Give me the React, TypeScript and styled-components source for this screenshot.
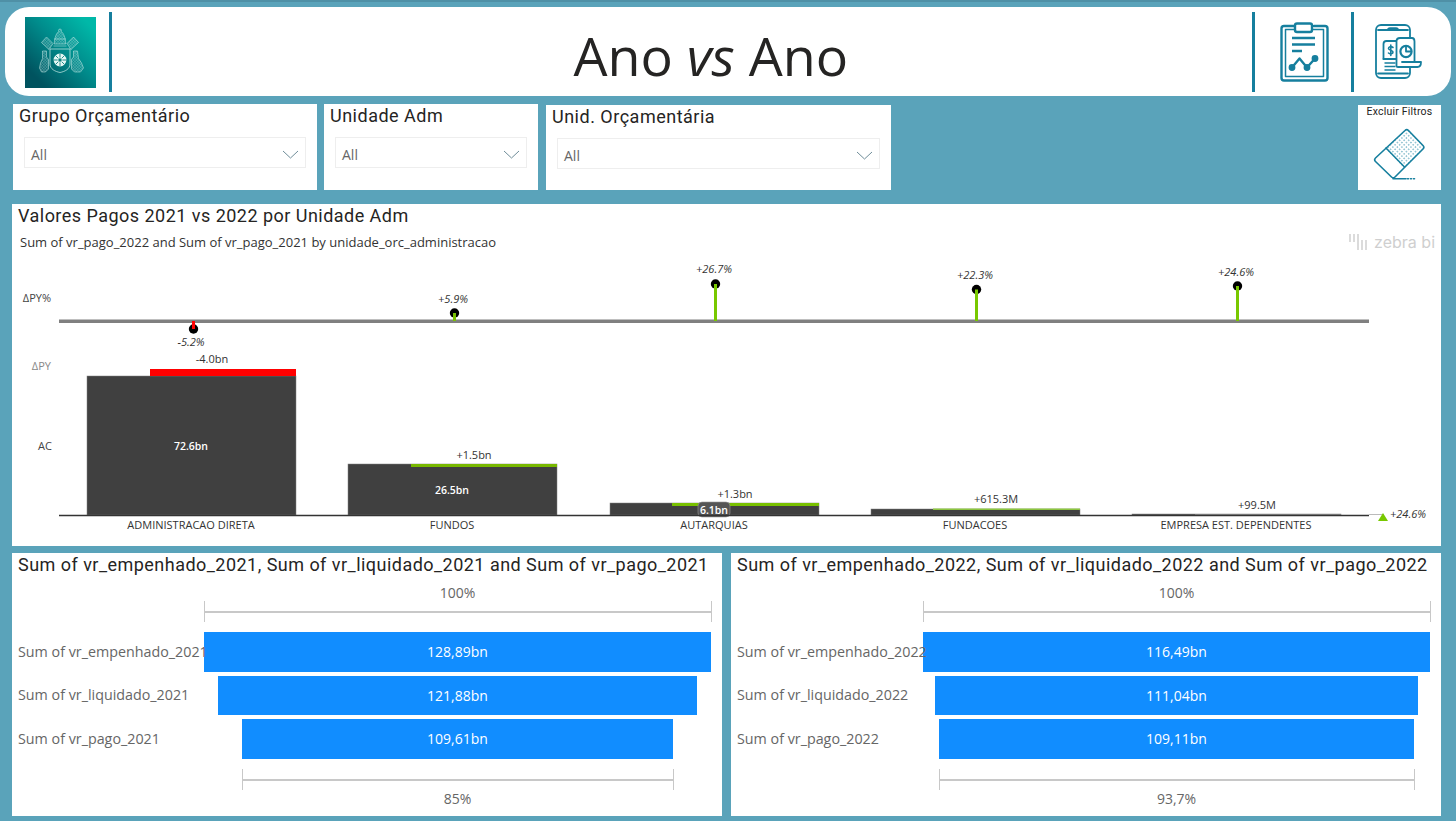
import React from 'react';
import styled, { createGlobalStyle } from 'styled-components';

const TEAL = '#167f9e';

const GlobalStyle = createGlobalStyle`
  html, body {
    margin: 0;
    padding: 0;
    background: #5aa3ba;
  }
  * {
    box-sizing: border-box;
  }
`;

const filters = [
  { title: 'Grupo Orçamentário', width: 304, top: 0, after: 0, height: 86 },
  { title: 'Unidade Adm', width: 214, top: 0, after: 1, height: 86 },
  { title: 'Unid. Orçamentária', width: 345, top: 1, after: 0, height: 85 },
];

const lollipops = [
  { x: 193.5, dotY: 329, color: '#ff0000', label: '-5.2%', labelX: 191, labelY: 342 },
  { x: 454.5, dotY: 313, color: '#78c000', label: '+5.9%', labelX: 453, labelY: 299 },
  { x: 715.5, dotY: 284, color: '#78c800', label: '+26.7%', labelX: 714, labelY: 269 },
  { x: 976.5, dotY: 289.5, color: '#78c800', label: '+22.3%', labelX: 975, labelY: 275 },
  { x: 1237.5, dotY: 286, color: '#78c800', label: '+24.6%', labelX: 1236, labelY: 272 },
];

const columns = [
  { x: 87, top: 376, name: 'ADMINISTRACAO DIRETA', nameX: 191, delta: '-4.0bn', deltaX: 212, deltaY: 359, value: '72.6bn', valueY: 446, color: '#ff0000', barTop: 369, barH: 7, barX: 150 },
  { x: 348, top: 464, name: 'FUNDOS', nameX: 452, delta: '+1.5bn', deltaX: 474, deltaY: 455, value: '26.5bn', valueY: 490, color: '#78b800', barTop: 464, barH: 3, barX: 411 },
  { x: 610, top: 503, name: 'AUTARQUIAS', nameX: 714, delta: '+1.3bn', deltaX: 735, deltaY: 494, value: '', valueY: 0, color: '#78c000', barTop: 503, barH: 3, barX: 672 },
  { x: 871, top: 509, name: 'FUNDACOES', nameX: 975, delta: '+615.3M', deltaX: 996, deltaY: 499, value: '', valueY: 0, color: '#8cc63f', barTop: 508.5, barH: 1.5, barX: 933 },
  { x: 1132, top: 514, name: 'EMPRESA EST. DEPENDENTES', nameX: 1236, delta: '+99.5M', deltaX: 1257, deltaY: 505, value: '', valueY: 0, color: '#bbbbbb', barTop: 514, barH: 0.5, barX: 1195 },
];

const funnels = [
  {
    title: 'Sum of vr_empenhado_2021, Sum of vr_liquidado_2021 and Sum of vr_pago_2021',
    rows: [
      { label: 'Sum of vr_empenhado_2021', value: '128,89bn', width: 507 },
      { label: 'Sum of vr_liquidado_2021', value: '121,88bn', width: 479 },
      { label: 'Sum of vr_pago_2021', value: '109,61bn', width: 431 },
    ],
    bottom: '85%',
    bottomWidth: 432,
  },
  {
    title: 'Sum of vr_empenhado_2022, Sum of vr_liquidado_2022 and Sum of vr_pago_2022',
    rows: [
      { label: 'Sum of vr_empenhado_2022', value: '116,49bn', width: 507 },
      { label: 'Sum of vr_liquidado_2022', value: '111,04bn', width: 483 },
      { label: 'Sum of vr_pago_2022', value: '109,11bn', width: 475 },
    ],
    bottom: '93,7%',
    bottomWidth: 476,
  },
];

function Crest() {
  return (
    <LogoBox>
      <svg width="71" height="71" viewBox="25 17 71 71" fill="none" stroke="#cfeeea" strokeWidth="0.5">
        <defs>
          <pattern id="mesh" width="2" height="2" patternUnits="userSpaceOnUse" patternTransform="rotate(45)">
            <path d="M0 0H2M0 0V2" stroke="#cfeeea" strokeWidth="0.45" />
          </pattern>
        </defs>
        {/* tiara */}
        <path d="M60 29c1.400 0 1.800 1.400 1 2.400 2.600 1.400 4.400 6.200 4.800 12.600H54.200c.4-6.400 2.200-11.200 4.800-12.600-.8-1-.4-2.400 1-2.400z" fill="url(#mesh)" />
        <path d="M54 39h12M53.500 46h13" />
        {/* keys */}
        <path d="M46.500 37l6.500 6.500-4 6-7.500-7z" fill="url(#mesh)" />
        <path d="M73.500 37l-6.500 6.500 4 6 7.500-7z" fill="url(#mesh)" />
        {/* shield */}
        <path d="M50 49h20v15c0 5-5 7.500-10 8.500-5-1-10-3.500-10-8.500z" strokeWidth="0.7" />
        <circle cx="60" cy="60" r="6.400" fill="#e4f7f4" stroke="none" />
        <circle cx="60" cy="60" r="1.700" fill="#0d807f" stroke="none" />
        <path d="M60 53.600v4M60 62.400v4M53.600 60h4M62.400 60h4M55.500 55.500l2.800 2.800M61.700 61.700l2.800 2.800M64.500 55.500l-2.800 2.800M58.300 61.700l-2.800 2.800" stroke="#0d807f" strokeWidth="0.9" />
        {/* side figures */}
        <path d="M42.500 51h4v6l2 2.500v9.500l-3 3h-4l-2-4 1-5 2-4.500z" fill="url(#mesh)" />
        <path d="M77.500 51h-4v6l-2 2.500v9.500l3 3h6l3-4-2-5-3-4.500z" fill="url(#mesh)" />
      </svg>
    </LogoBox>
  );
}

function ClipboardIcon() {
  return (
    <svg width="50" height="60" viewBox="1280 21 50 60" fill="none" stroke={TEAL} strokeWidth="2.400" strokeLinecap="round" strokeLinejoin="round">
      <path d="M1295 25h-11c-1.500 0-2.500 1-2.500 2.500v49.500c0 1.500 1 2.500 2.500 2.500h41c1.500 0 2.500-1 2.500-2.500V27.500c0-1.500-1-2.500-2.500-2.500h-11" />
      <path d="M1295 28.500h-9.500v47h38v-47H1312" strokeWidth="1.500" />
      <rect x="1295" y="22.500" width="17" height="8.500" rx="2" fill="#fff" />
      <path d="M1292 37h23M1292 43.500h23M1292 50h10" strokeLinecap="butt" />
      <path d="M1292 66.500l7.500-9 7.500 9 8-9" />
      <circle cx="1292" cy="66.500" r="2.200" fill={TEAL} />
      <circle cx="1307" cy="66.500" r="2.200" fill={TEAL} />
      <circle cx="1315" cy="57.500" r="2.200" fill={TEAL} />
    </svg>
  );
}

function PhoneReportIcon() {
  return (
    <svg width="48" height="56" viewBox="1374 24 48 56" fill="none" stroke={TEAL} strokeWidth="1.800" strokeLinecap="round" strokeLinejoin="round">
      <rect x="1376" y="25" width="34" height="53" rx="5" />
      <path d="M1378 30h30M1378 73.500h30M1388 30c0-1.500 1-1.800 2-1.800h6c1 0 2 .3 2 1.800" />
      <path d="M1383.500 59V44c0-2 1-3 3-3h10" />
      <path d="M1383.500 59h13" />
      <path d="M1396.500 66V41.500c0-2 1.500-3.500 3.500-3.500h12c1.500 0 2.500 1.500 2.500 3.500V62h6.500c0 3-1.500 5-3.500 5h-19.500c-1 0-1.500-.3-1.500-1z" fill="#fff" />
      <path d="M1402 62h12.500" />
      <circle cx="1406" cy="51.500" r="5.600" strokeWidth="2.200" />
      <path d="M1406 46.500v5h5" strokeWidth="1.800" />
      <path d="M1393 47.500c-2-1.500-4.500-.8-4.500 1s4.500 1.500 4.500 3.500-2.800 2.500-4.500 1M1390.800 45v10.500" strokeWidth="1.600" />
      <path d="M1384.500 63h11M1384.500 66.500h11M1384.500 70h11" strokeWidth="1.500" strokeLinecap="butt" />
    </svg>
  );
}

function EraserIcon() {
  return (
    <svg width="62" height="62" viewBox="1370 125 62 62" fill="none" stroke={TEAL} strokeWidth="1.600" strokeLinecap="round" strokeLinejoin="round">
      <defs>
        <pattern id="dots" width="3.200" height="3.200" patternUnits="userSpaceOnUse" patternTransform="rotate(45)">
          <circle cx="1.600" cy="1.600" r="0.650" fill={TEAL} stroke="none" />
        </pattern>
      </defs>
      <path d="M1387 149l21-20 17 18-20 21z" fill="url(#dots)" stroke="none" />
      <path d="M1406 130.500c1-1 2.500-1 3.500 0l14.500 15c1 1 1 2.500 0 3.500l-28 28c-1 1-2.500 1-3.500 0l-16-15.500c-1-1-1-2.500 0-3.500z" />
      <path d="M1387 148l18.500 19" />
      <path d="M1394 178.700h13" />
      <path d="M1408.500 178.700h8" strokeDasharray="1 2" />
    </svg>
  );
}

function ZebraMark() {
  return (
    <ZebraSlot>
      <svg width="18" height="18" viewBox="0 0 18 18" stroke="#cfcfcf" strokeWidth="1.500">
        <path d="M1 1v8M5 1v8M9 1v16M13 7v10M17 7v10" />
      </svg>
      <ZebraText>zebra bi</ZebraText>
    </ZebraSlot>
  );
}

function VarianceChart() {
  return (
    <ChartSvg width="1429" height="290" viewBox="12 256 1429 290">
      <RowLabel x="51" y="298">ΔPY%</RowLabel>
      <RowLabel x="51" y="366" $muted>ΔPY</RowLabel>
      <RowLabel x="52" y="446">AC</RowLabel>

      <rect x="59" y="319.500" width="1310" height="3.500" fill="#808080" />
      {lollipops.map((item) => (
        <g key={item.label}>
          <circle cx={item.x} cy={item.dotY} r="4.700" fill="#000" />
          <rect
            x={item.x - 1.500}
            y={Math.min(item.dotY, 321)}
            width="3"
            height={Math.abs(item.dotY - 321)}
            fill={item.color}
          />
          <PercentLabel x={item.labelX} y={item.labelY}>{item.label}</PercentLabel>
        </g>
      ))}

      {columns.map((col) => (
        <g key={col.name}>
          <rect x={col.x} y={col.top} width="209" height={515 - col.top} fill="#404040" stroke="#808080" strokeWidth="0.500" />
          <rect x={col.barX} y={col.barTop} width={col.x + 209 - col.barX} height={col.barH} fill={col.color} />
          <ValueLabel x={col.deltaX} y={col.deltaY}>{col.delta}</ValueLabel>
          <ValueLabel x={col.nameX} y="525.500">{col.name}</ValueLabel>
          {col.value && <InnerLabel x={col.nameX} y={col.valueY}>{col.value}</InnerLabel>}
        </g>
      ))}

      <rect x="698" y="502" width="32" height="15" rx="4" fill="#555" stroke="#999" strokeWidth="0.600" />
      <InnerLabel x="714" y="510">6.1bn</InnerLabel>

      <path d="M59 515.500H1369" stroke="#333" strokeWidth="1.300" />
      <path d="M1369 514.500H1384" stroke="#aaa" strokeWidth="0.800" />
      <path d="M1378 521l5-8 5 8z" fill="#78c800" />
      <PercentLabel x="1408" y="514">+24.6%</PercentLabel>
    </ChartSvg>
  );
}

export default function App() {
  return (
    <Page>
      <GlobalStyle />
      <Header>
        <Crest />
        <Divider />
        <PageTitle>
          Ano <em>vs</em> Ano
        </PageTitle>
        <Divider />
        <IconSlot $width={96.5} $left={25.5}>
          <ClipboardIcon />
        </IconSlot>
        <Divider />
        <IconSlot $width={97.5} $left={20.5}>
          <PhoneReportIcon />
        </IconSlot>
      </Header>

      <FilterRow>
        {filters.map((filter) => (
          <FilterCard
            key={filter.title}
            $width={filter.width}
            $top={filter.top}
            $height={filter.height}
            $after={filter.after}
          >
            <FilterTitle>{filter.title}</FilterTitle>
            <Dropdown>
              <span>All</span>
              <svg width="17" height="9" viewBox="0 0 17 9" fill="none" stroke="#6f8d99" strokeWidth="1">
                <path d="M1 1l7.500 7L16 1" />
              </svg>
            </Dropdown>
          </FilterCard>
        ))}
        <ClearButton>
          <ClearLabel>Excluir Filtros</ClearLabel>
          <EraserIcon />
        </ClearButton>
      </FilterRow>

      <ChartCard>
        <ZebraMark />
        <CardTitle>Valores Pagos 2021 vs 2022 por Unidade Adm</CardTitle>
        <Subtitle>Sum of vr_pago_2022 and Sum of vr_pago_2021 by unidade_orc_administracao</Subtitle>
        <VarianceChart />
      </ChartCard>

      <BottomRow>
        {funnels.map((funnel) => (
          <FunnelCard key={funnel.title}>
            <FunnelTitle>{funnel.title}</FunnelTitle>
            <RulerBlock $gap={9}>
              <RulerLabel>100%</RulerLabel>
              <Ruler $width={508} />
            </RulerBlock>
            <FunnelRows>
              {funnel.rows.map((row) => (
                <FunnelRow key={row.label}>
                  <FunnelLabel>{row.label}</FunnelLabel>
                  <BarTrack>
                    <Bar style={{ width: row.width }}>{row.value}</Bar>
                  </BarTrack>
                </FunnelRow>
              ))}
            </FunnelRows>
            <RulerBlock $gap={10.5}>
              <Ruler $width={funnel.bottomWidth} />
              <RulerLabel>{funnel.bottom}</RulerLabel>
            </RulerBlock>
          </FunnelCard>
        ))}
      </BottomRow>
    </Page>
  );
}

const Page = styled.div`
  width: 1456px;
  height: 821px;
  overflow: hidden;
  display: flex;
  flex-direction: column;
  padding-top: 7px;
  background: #5aa3ba;
  border-top: 2px solid #4f90a6;
  font-family: 'Open Sans', 'Liberation Sans', sans-serif;
`;

const Header = styled.header`
  margin: -2px 5px 0;
  height: 89px;
  flex: none;
  display: flex;
  align-items: center;
  padding-left: 20px;
  background: #fff;
  border-radius: 24px;
`;

const LogoBox = styled.div`
  width: 71px;
  height: 71px;
  flex: none;
  margin: 2px 13px 0 0;
  background: linear-gradient(45deg, #00535f 15%, #008c8c 55%, #00b8a8 90%);
  svg {
    display: block;
  }
`;

const Divider = styled.div`
  width: 2.500px;
  height: 80px;
  flex: none;
  margin-top: 1px;
  background: ${TEAL};
`;

const PageTitle = styled.h1`
  flex: 1;
  margin: 0;
  padding: 9px 0 0 58px;
  text-align: center;
  font-family: 'Open Sans', sans-serif;
  font-size: 53.800px;
  font-weight: 400;
  line-height: 1;
  color: #252423;
`;

const IconSlot = styled.div<{ $width: number; $left: number }>`
  width: ${(p) => p.$width}px;
  flex: none;
  display: flex;
  padding-left: ${(p) => p.$left}px;
  svg {
    display: block;
  }
`;

const FilterRow = styled.section`
  display: flex;
  gap: 7px;
  height: 86px;
  flex: none;
  margin: 8px 15px 0 13px;
`;

const FilterCard = styled.div<{ $width: number; $top: number; $height: number; $after: number }>`
  width: ${(p) => p.$width}px;
  height: ${(p) => p.$height}px;
  margin: ${(p) => p.$top}px ${(p) => p.$after}px 0 0;
  background: #fff;
  padding: 0 11px 0 6px;
`;

const FilterTitle = styled.div`
  height: 22px;
  margin-bottom: 11px;
  display: flex;
  align-items: center;
  font-family: Roboto, sans-serif;
  font-size: 18px;
  letter-spacing: 0.5px;
  color: #252423;
`;

const Dropdown = styled.div`
  height: 31px;
  margin-left: 5px;
  display: flex;
  align-items: center;
  justify-content: space-between;
  padding: 3px 6px 0 6px;
  border: 1.500px solid #eeeeee;
  font-size: 14px;
  color: #666666;
`;

const ClearButton = styled.div`
  margin: 1px 0 0 auto;
  width: 83px;
  height: 85px;
  display: flex;
  flex-direction: column;
  align-items: center;
  background: #fff;
  svg {
    display: block;
    margin-top: 6px;
  }
`;

const ClearLabel = styled.div`
  height: 14px;
  line-height: 14px;
  font-family: Roboto, sans-serif;
  font-size: 10.500px;
  letter-spacing: 0.2px;
  color: #252423;
`;

const ChartCard = styled.section`
  position: relative;
  height: 342px;
  flex: none;
  margin: 14px 15px 0 12px;
  background: #fff;
`;

const ZebraSlot = styled.div`
  position: absolute;
  top: 28px;
  right: 6px;
  display: flex;
  align-items: center;
  gap: 7px;
`;

const ZebraText = styled.span`
  font-family: Inter, sans-serif;
  font-size: 16px;
  color: #cfcfcf;
`;

const CardTitle = styled.h2`
  margin: 0 0 2px;
  height: 22px;
  padding-left: 6px;
  display: flex;
  align-items: center;
  font-family: Roboto, sans-serif;
  font-size: 18px;
  font-weight: 400;
  letter-spacing: 0.47px;
  color: #252423;
`;

const Subtitle = styled.div`
  height: 28px;
  padding-left: 8px;
  display: flex;
  align-items: center;
  font-size: 13px;
  color: #333;
`;

const ChartSvg = styled.svg`
  display: block;
  font-family: 'Open Sans', sans-serif;
`;

const RowLabel = styled.text<{ $muted?: boolean }>`
  font-size: 11px;
  fill: ${(p) => (p.$muted ? '#888' : '#444')};
  text-anchor: end;
  dominant-baseline: central;
  transform: translateY(-1px);
`;

const ValueLabel = styled.text`
  font-size: 11px;
  fill: #333;
  text-anchor: middle;
  dominant-baseline: central;
  transform: translateY(-1px);
`;

const PercentLabel = styled(ValueLabel)`
  font-style: italic;
`;

const InnerLabel = styled.text`
  font-size: 10.500px;
  font-weight: 600;
  fill: #fff;
  text-anchor: middle;
  dominant-baseline: central;
`;

const BottomRow = styled.section`
  display: flex;
  gap: 9px;
  margin: 7px 15px 0 12px;
`;

const FunnelCard = styled.div`
  width: 710px;
  height: 263px;
  background: #fff;
  padding-left: 6px;
`;

const FunnelTitle = styled.div`
  height: 22px;
  margin-bottom: 2px;
  display: flex;
  align-items: center;
  white-space: nowrap;
  font-family: Roboto, sans-serif;
  font-size: 18px;
  letter-spacing: 0.47px;
  color: #252423;
`;

const RulerBlock = styled.div<{ $gap: number }>`
  width: 507px;
  margin: ${(p) => p.$gap}px 0 0 186px;
  display: flex;
  flex-direction: column;
  align-items: center;
`;

const RulerLabel = styled.div`
  height: 17px;
  display: flex;
  align-items: center;
  font-size: 14px;
  color: #666;
`;

const Ruler = styled.div<{ $width: number }>`
  position: relative;
  flex: none;
  width: ${(p) => p.$width}px;
  height: 21px;
  border-left: 1.500px solid #c8c8c8;
  border-right: 1.500px solid #c8c8c8;
  &::before {
    content: '';
    position: absolute;
    top: 10px;
    left: 0;
    right: 0;
    height: 2px;
    background: #c8c8c8;
  }
`;

const FunnelRows = styled.div`
  margin-top: 10px;
  display: flex;
  flex-direction: column;
  gap: 4px;
`;

const FunnelRow = styled.div`
  position: relative;
  display: flex;
  height: 39.500px;
  align-items: center;
`;

const FunnelLabel = styled.div`
  position: relative;
  z-index: 1;
  width: 186px;
  flex: none;
  margin-top: -1px;
  white-space: nowrap;
  font-size: 14.300px;
  color: #666;
`;

const BarTrack = styled.div`
  width: 507px;
  height: 100%;
  display: flex;
  justify-content: center;
`;

const Bar = styled.div`
  height: 100%;
  display: flex;
  align-items: center;
  justify-content: center;
  background: #118dff;
  font-size: 14px;
  color: #fff;
`;
